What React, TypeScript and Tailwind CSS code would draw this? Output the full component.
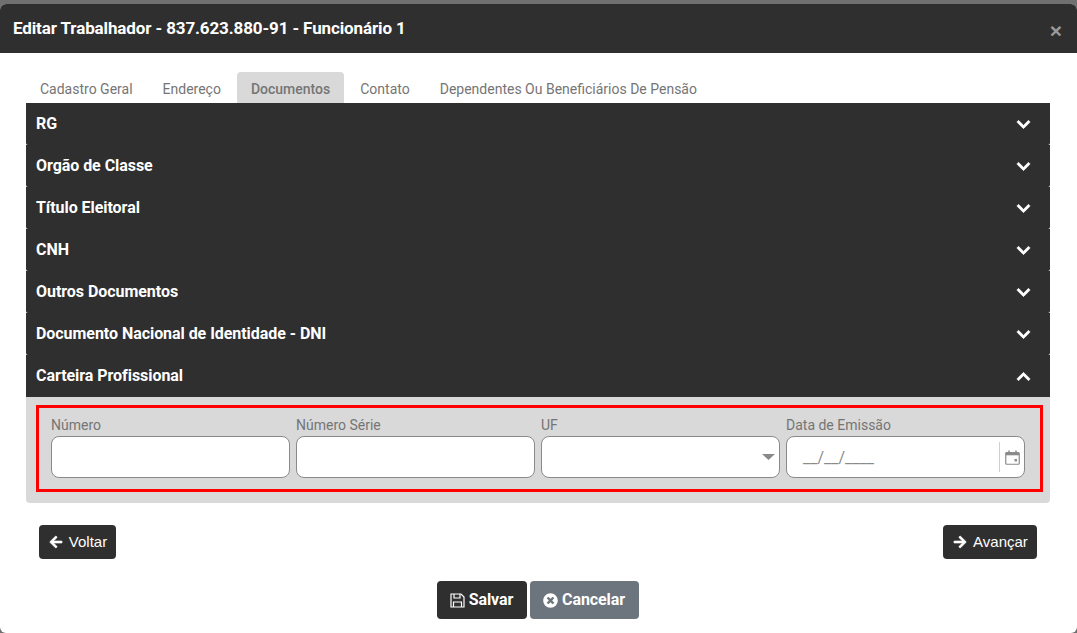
import { FaArrowLeft, FaArrowRight, FaChevronDown, FaChevronUp, FaTimesCircle } from "react-icons/fa";

const tabs = ["Cadastro Geral", "Endereço", "Documentos", "Contato", "Dependentes Ou Beneficiários De Pensão"];
const sections = [
  "RG",
  "Orgão de Classe",
  "Título Eleitoral",
  "CNH",
  "Outros Documentos",
  "Documento Nacional de Identidade - DNI",
];

function Row({ title, open }: { title: string; open?: boolean }) {
  const chevron = "h-[15px] w-[15px] stroke-current stroke-[24]";
  return (
    <div className={`flex h-[42px] items-center justify-between bg-[#2f2f2f] pl-[10px] pr-[19px] text-white ${open ? "" : "rounded-b-[2px]"}`}>
      <span className="text-[16px] font-bold tracking-[-0.05px]">{title}</span>
      {open ? <FaChevronUp className={chevron} /> : <FaChevronDown className={chevron} />}
    </div>
  );
}

function Field({ label, children }: { label: string; children?: React.ReactNode }) {
  return (
    <div className="w-[239px]">
      <p className="h-[23px] pt-[2px] text-[14px] leading-[20px] text-[#757575]">{label}</p>
      <div className="flex h-[42px] items-center rounded-[8px] border border-[#8a8a8a] bg-white">{children}</div>
    </div>
  );
}

export default function App() {
  return (
    <div className="h-[633px] overflow-hidden bg-[#707070] pt-[4px] font-['Roboto',sans-serif]">
      <div className="h-[629px] rounded-[6px] bg-white">
        <div className="flex h-[49px] items-center justify-between rounded-t-[6px] bg-[#2f2f2f] pl-[13px] pr-[15px] text-white">
          <h1 className="text-[17px] font-bold tracking-[-0.12px]">Editar Trabalhador - 837.623.880-91 - Funcionário 1</h1>
          <span className="mt-[3px] font-['Liberation_Sans',sans-serif] text-[21px] font-bold leading-none text-[#9a9a9a]">×</span>
        </div>

        <div className="pl-[26px] pr-[27px]">
          <div className="flex gap-[4px] pl-[1px] pt-[19px]">
            {tabs.map((tab) => (
              <div
                key={tab}
                className={`flex h-[31px] items-center rounded-t-[4px] pt-[3px] text-[14px] text-[#757575] ${
                  tab === "Documentos" ? "mx-[-1px] bg-[#d9d9d9] px-[14px] font-medium" : "px-[13px]"
                }`}
              >
                {tab}
              </div>
            ))}
          </div>

          {sections.map((s) => (
            <Row key={s} title={s} />
          ))}
          <Row title="Carteira Profissional" open />

          <div className="h-[106px] rounded-b-[4px] bg-[#d9d9d9] pl-[10px] pr-[7px] pt-[8px]">
            <div className="flex h-[87px] gap-[6px] border-[3px] border-[#ff0000] pl-[12px] pt-[5px]">
              <Field label="Número" />
              <Field label="Número Série" />
              <Field label="UF">
                <svg viewBox="0 0 13 6" className="ml-auto mr-[4px] h-[6px] w-[13px] fill-[#8a8a8a]">
                  <path d="M0 0h13L6.5 6z" />
                </svg>
              </Field>
              <Field label="Data de Emissão">
                <span className="pl-[16px] pt-[2px] text-[16px] text-[#8a8a8a]">__/__/____</span>
                <div className="ml-auto flex h-[30px] items-center border-l border-[#cfcfcf] pl-[5px] pr-[4px]">
                  <svg viewBox="0 0 15 15" className="h-[15px] w-[15px] fill-none stroke-[#8a8a8a]">
                    <rect x="0.75" y="2.5" width="13.5" height="11.75" rx="1" strokeWidth="1.2" />
                    <path d="M1 4h13" strokeWidth="2.6" />
                    <path d="M4 0.5v2M11 0.5v2" strokeWidth="1.5" />
                    <rect x="9.5" y="9" width="2.5" height="2.5" className="fill-[#8a8a8a]" strokeWidth="0" />
                  </svg>
                </div>
              </Field>
            </div>
          </div>
        </div>

        <div className="flex justify-between pl-[39px] pr-[40px] pt-[22px] font-['Liberation_Sans',sans-serif] text-[15px] text-white">
          <button className="flex h-[34px] w-[77px] items-center justify-center gap-[6px] rounded-[4px] bg-[#2f2f2f] pl-[1px]">
            <FaArrowLeft className="h-[14px] w-[14px] stroke-current stroke-[20]" />
            Voltar
          </button>
          <button className="flex h-[34px] w-[94px] items-center justify-center gap-[6px] rounded-[4px] bg-[#2f2f2f] pl-[1px]">
            <FaArrowRight className="h-[14px] w-[14px] stroke-current stroke-[20]" />
            Avançar
          </button>
        </div>

        <div className="flex justify-center gap-[3px] pr-[2px] pt-[22px] text-[16px] font-bold tracking-[-0.1px] text-white">
          <button className="flex h-[38px] w-[90px] items-center justify-center gap-[4px] rounded-[4px] bg-[#2f2f2f]">
            <svg viewBox="0 0 15 15" className="h-[15px] w-[15px] fill-none stroke-white" strokeWidth="1.2">
              <path d="M1 1h10l3 3v10H1z" />
              <path d="M4 1v4h6V1" />
              <path d="M3.5 14V9h8v5" />
            </svg>
            Salvar
          </button>
          <button className="flex h-[38px] w-[109px] items-center justify-center gap-[4px] rounded-[4px] bg-[#6c757d]">
            <FaTimesCircle className="h-[15px] w-[15px]" />
            Cancelar
          </button>
        </div>
      </div>
    </div>
  );
}
